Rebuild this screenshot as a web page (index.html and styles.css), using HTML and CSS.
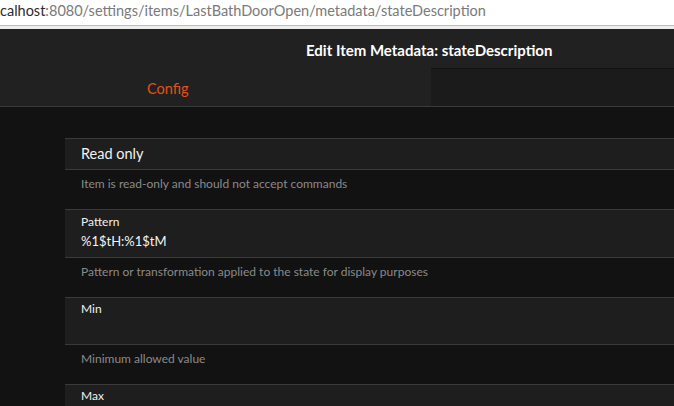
FILE: index.html
```html
<!DOCTYPE html>
<html>
<head>
<meta charset="utf-8">
<link rel="stylesheet" href="styles.css">
</head>
<body>
<div class="urlbar"><span class="host">calhost</span>:8080/settings/items/LastBathDoorOpen/metadata/stateDescription</div>
<div class="urlsep"></div>
<div class="app">
  <div class="navbar">
    <div class="title">Edit Item Metadata: stateDescription</div>
  </div>
  <div class="tabs">
    <div class="tab active">Config</div>
    <div class="tab-rest"></div>
  </div>
  <div class="content">
    <ul class="list">
      <li class="item toggle">Read only</li>
      <li class="item info">Item is read-only and should not accept commands</li>
      <li class="item field">
        <div class="label">Pattern</div>
        <div class="value">%1$tH:%1$tM</div>
      </li>
      <li class="item info">Pattern or transformation applied to the state for display purposes</li>
      <li class="item field compact">
        <div class="label">Min</div>
        <div class="value"></div>
      </li>
      <li class="item info">Minimum allowed value</li>
      <li class="item field compact">
        <div class="label">Max</div>
        <div class="value"></div>
      </li>
    </ul>
  </div>
</div>
</body>
</html>
```
FILE: styles.css
```css
* { box-sizing: border-box; }
html, body {
  margin: 0;
  padding: 0;
  overflow: hidden;
  height: 406px;
  background: #121212;
  font-family: Lato, "Noto Sans", sans-serif;
}
.urlbar {
  height: 25px;
  background: #ffffff;
  color: #7a7a7a;
  font-size: 14.5px;
  line-height: 22px;
  white-space: nowrap;
}
.urlbar .host { color: #2c2c2c; }
.urlsep {
  height: 4px;
  border-top: 1px solid #bdbdbd;
  background: #ededed;
}
.app { background: #121212; }
.navbar {
  height: 39px;
  background: #212121;
  display: flex;
  align-items: center;
  padding-left: 306px;
}
.title {
  color: #ffffff;
  font-weight: bold;
  font-size: 15px;
  line-height: 20px;
  padding-top: 2px;
  white-space: nowrap;
}
.tabs {
  display: flex;
  height: 39px;
  border-bottom: 1px solid #3a3a3a;
}
.tab {
  width: 431px;
  background: #212121;
  color: #e2511c;
  font-size: 14.5px;
  line-height: 20px;
  padding-left: 147px;
  padding-top: 11px;
}
.tab-rest {
  flex: 1;
  background: #1b1b1b;
  margin-top: 1px;
}
.content { padding-top: 31px; }
.list {
  list-style: none;
  margin: 0 0 0 65px;
  padding: 0;
}
.item {
  border-top: 1px solid #3a3a3a;
  padding-left: 16px;
  white-space: nowrap;
}
.toggle {
  height: 31px;
  background: #1e1e1e;
  color: #f2f2f2;
  font-size: 14.5px;
  line-height: 30px;
}
.info {
  height: 40px;
  color: #8a8a8a;
  font-size: 12px;
  line-height: 14px;
  padding-top: 7px;
}
.field {
  height: 48px;
  background: #1e1e1e;
  padding-top: 5px;
}
.field.compact {
  height: 47px;
  padding-top: 4px;
}
.label {
  color: #f0f0f0;
  font-size: 12px;
  line-height: 14px;
}
.value {
  color: #f4f4f4;
  font-size: 13px;
  line-height: 22px;
  margin-top: 1px;
}
```
